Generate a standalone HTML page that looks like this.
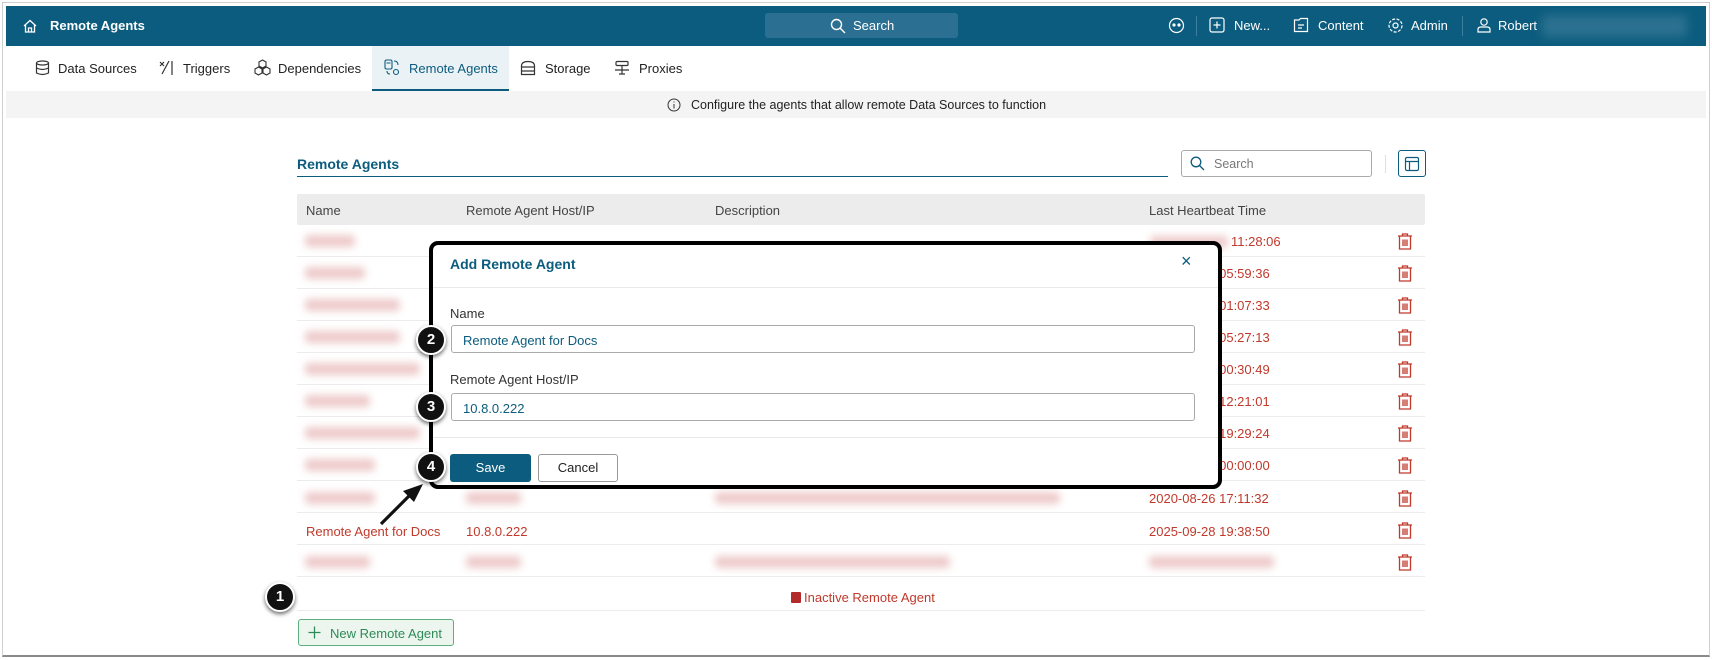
<!DOCTYPE html>
<html><head><meta charset="utf-8"><style>
*{box-sizing:border-box;margin:0;padding:0}
body{width:1712px;height:660px;background:#fff;font-family:"Liberation Sans",sans-serif;position:relative;overflow:hidden;font-size:13px;color:#333}
.abs{position:absolute}
.frame{left:2px;top:2px;width:1708px;height:655px;border:1px solid #cfcfcf;border-bottom:2px solid #8a8a8a}
.nav{left:6px;top:6px;width:1700px;height:40px;background:#0b5c7e;color:#fff}
.nav .t{position:absolute;top:12px;font-size:13px}
.tabs span{position:absolute;top:61px;font-size:13px;color:#222}
.blur{position:absolute;height:12px;background:#d98a8a;filter:blur(4px);opacity:.45;border-radius:4px}
.red{color:#c0392b}
.row{position:absolute;left:297px;width:1128px;height:32px;border-bottom:1px solid #ececec}
.badge{position:absolute;width:30px;height:30px;border-radius:50%;background:#111;border:2px solid #fff;box-shadow:0 2px 4px rgba(0,0,0,.6);color:#fff;font-size:15px;font-weight:bold;text-align:center;line-height:26px}
</style></head><body>
<div class="abs frame"></div>
<div class="abs nav">
 <svg class="abs" style="left:16px;top:12px" width="16" height="16" viewBox="0 0 16 16" fill="none" stroke="#fff" stroke-width="1.3"><path d="M2 8 L8 2.5 L14 8 M3.5 6.8 V14 H12.5 V6.8 M6.5 14 V10 H9.5 V14"/></svg>
 <div class="t" style="left:44px;font-weight:bold">Remote Agents</div>
 <div class="abs" style="left:759px;top:7px;width:193px;height:25px;background:#2b7092;border-radius:3px"></div>
 <svg class="abs" style="left:824px;top:12px" width="16" height="16" viewBox="0 0 16 16" fill="none" stroke="#fff" stroke-width="1.4"><circle cx="6.5" cy="6.5" r="5"/><path d="M10 10 L15 15"/></svg>
 <div class="t" style="left:847px">Search</div>
 <svg class="abs" style="left:1162px;top:11px" width="17" height="17" viewBox="0 0 17 17" fill="none" stroke="#fff" stroke-width="1.2"><circle cx="8.5" cy="8.5" r="7"/><circle cx="6" cy="8" r="1" fill="#fff"/><circle cx="11" cy="8" r="1" fill="#fff"/></svg>
 <div class="abs" style="left:1190px;top:10px;width:1px;height:20px;background:#3d7f9e"></div>
 <svg class="abs" style="left:1203px;top:11px" width="16" height="16" viewBox="0 0 16 16" fill="none" stroke="#fff" stroke-width="1.2"><rect x="1" y="1" width="14" height="14" rx="2"/><path d="M8 4.5 V11.5 M4.5 8 H11.5"/></svg>
 <div class="t" style="left:1228px">New...</div>
 <svg class="abs" style="left:1287px;top:11px" width="16" height="16" viewBox="0 0 16 16" fill="none" stroke="#fff" stroke-width="1.2"><path d="M1.5 3 H6 L7.5 1.5 H14.5 V14.5 H1.5 Z M5 8 H11 M5 11 H9"/></svg>
 <div class="t" style="left:1312px">Content</div>
 <svg class="abs" style="left:1381px;top:11px" width="17" height="17" viewBox="0 0 17 17" fill="none" stroke="#fff" stroke-width="1.2"><circle cx="8.5" cy="8.5" r="2.5"/><circle cx="8.5" cy="8.5" r="6.5" stroke-dasharray="3 1.5"/></svg>
 <div class="t" style="left:1405px">Admin</div>
 <div class="abs" style="left:1456px;top:10px;width:1px;height:20px;background:#3d7f9e"></div>
 <svg class="abs" style="left:1470px;top:11px" width="16" height="16" viewBox="0 0 16 16" fill="none" stroke="#fff" stroke-width="1.2"><circle cx="8" cy="5" r="3.2"/><path d="M2 15 V12.5 Q2 10 5 10 H11 Q14 10 14 12.5 V15 Z"/></svg>
 <div class="t" style="left:1492px">Robert</div>
 <div class="abs" style="left:1536px;top:9px;width:145px;height:22px;background:#3a7a98;filter:blur(5px);opacity:.7"></div>
</div>
<div class="abs" style="left:372px;top:46px;width:137px;height:45px;background:#ebf2f6;border-bottom:2px solid #0b5c7e"></div>
<div class="tabs">
 <svg class="abs" style="left:35px;top:60px" width="15" height="16" viewBox="0 0 15 16" fill="none" stroke="#333" stroke-width="1.2"><ellipse cx="7.5" cy="3" rx="6" ry="2"/><path d="M1.5 3 V13 Q7.5 16 13.5 13 V3 M1.5 8 Q7.5 11 13.5 8"/></svg>
 <span style="left:58px">Data Sources</span>
 <svg class="abs" style="left:159px;top:60px" width="16" height="16" viewBox="0 0 16 16" fill="none" stroke="#333" stroke-width="1.2"><path d="M1 2 L5 6 M1 6 L5 2 M3 14 L10 1 M13 1 V15"/></svg>
 <span style="left:183px">Triggers</span>
 <svg class="abs" style="left:254px;top:59px" width="17" height="17" viewBox="0 0 17 17" fill="none" stroke="#333" stroke-width="1.1"><path d="M8.5 1 L12 3 V7 L8.5 9 L5 7 V3 Z M4.5 8 L8 10 V14 L4.5 16 L1 14 V10 Z M12.5 8 L16 10 V14 L12.5 16 L9 14 V10 Z"/></svg>
 <span style="left:278px">Dependencies</span>
 <svg class="abs" style="left:384px;top:59px" width="17" height="17" viewBox="0 0 17 17" fill="none" stroke="#0b5c7e" stroke-width="1.1"><rect x="1" y="1" width="7" height="9" rx="1.5"/><path d="M2.5 4 H6.5 M10 2 Q14 2 14 6 M3 12 Q3 15 6 15"/><circle cx="12" cy="13" r="2.5"/></svg>
 <span style="left:409px;color:#0b5c7e">Remote Agents</span>
 <svg class="abs" style="left:520px;top:60px" width="16" height="16" viewBox="0 0 16 16" fill="none" stroke="#333" stroke-width="1.2"><path d="M1.5 6 Q1.5 1.5 8 1.5 Q14.5 1.5 14.5 6 V14.5 H1.5 Z M1.5 7 H14.5 M1.5 11 H14.5"/></svg>
 <span style="left:545px">Storage</span>
 <svg class="abs" style="left:614px;top:60px" width="16" height="16" viewBox="0 0 16 16" fill="none" stroke="#333" stroke-width="1.2"><rect x="2" y="1.5" width="12" height="4" rx="1"/><path d="M8 5.5 V14 M1 10 H15 M5 14 H11"/></svg>
 <span style="left:639px">Proxies</span>
</div>
<div class="abs" style="left:6px;top:91px;width:1700px;height:27px;background:#f4f4f4"></div>
<svg class="abs" style="left:667px;top:98px" width="14" height="14" viewBox="0 0 14 14" fill="none" stroke="#333" stroke-width="1"><circle cx="7" cy="7" r="6"/><path d="M7 6 V10.5 M7 3.5 V4.5"/></svg>
<div class="abs" style="left:691px;top:98px;font-size:12.5px;color:#222">Configure the agents that allow remote Data Sources to function</div>

<div class="abs" style="left:297px;top:156px;font-size:14px;font-weight:bold;color:#0b5c7e">Remote Agents</div>
<div class="abs" style="left:297px;top:176px;width:871px;height:1px;background:#0b5c7e"></div>
<div class="abs" style="left:1181px;top:150px;width:191px;height:27px;border:1px solid #aaa;border-radius:3px"></div>
<svg class="abs" style="left:1190px;top:156px" width="15" height="15" viewBox="0 0 15 15" fill="none" stroke="#0b5c7e" stroke-width="1.3"><circle cx="6" cy="6" r="4.8"/><path d="M9.5 9.5 L14 14"/></svg>
<div class="abs" style="left:1214px;top:157px;color:#777;font-size:12.5px">Search</div>
<div class="abs" style="left:1385px;top:155px;width:1px;height:18px;background:#e0e0e0"></div>
<div class="abs" style="left:1398px;top:150px;width:28px;height:27px;border:1px solid #0b5c7e;border-radius:3px"></div>
<svg class="abs" style="left:1404px;top:156px" width="16" height="16" viewBox="0 0 16 16" fill="none" stroke="#0b5c7e" stroke-width="1.2"><rect x="1.5" y="1.5" width="13" height="13" rx="1.5"/><path d="M1.5 5.5 H14.5 M5.5 5.5 V14.5"/></svg>

<div class="abs" style="left:297px;top:194px;width:1128px;height:31px;background:#ececec;border-radius:2px"></div>
<div class="abs" style="left:306px;top:203px;color:#444">Name</div>
<div class="abs" style="left:466px;top:203px;color:#444">Remote Agent Host/IP</div>
<div class="abs" style="left:715px;top:203px;color:#444">Description</div>
<div class="abs" style="left:1149px;top:203px;color:#444">Last Heartbeat Time</div>

<div class="row" style="top:225px"></div><div class="row" style="top:257px"></div><div class="row" style="top:289px"></div><div class="row" style="top:321px"></div><div class="row" style="top:353px"></div><div class="row" style="top:385px"></div><div class="row" style="top:417px"></div><div class="row" style="top:449px"></div><div class="row" style="top:481px"></div><div class="row" style="top:513px"></div><div class="row" style="top:545px"></div><div class="row" style="top:577px;height:34px"></div>

<div class="blur" style="left:305px;top:235px;width:50px"></div>
<div class="blur" style="left:305px;top:267px;width:60px"></div>
<div class="blur" style="left:305px;top:299px;width:95px"></div>
<div class="blur" style="left:305px;top:331px;width:95px"></div>
<div class="blur" style="left:305px;top:363px;width:115px"></div>
<div class="blur" style="left:305px;top:395px;width:65px"></div>
<div class="blur" style="left:305px;top:427px;width:115px"></div>
<div class="blur" style="left:305px;top:459px;width:70px"></div>
<div class="blur" style="left:305px;top:492px;width:70px"></div>
<div class="blur" style="left:466px;top:492px;width:55px"></div>
<div class="blur" style="left:715px;top:492px;width:345px"></div>
<div class="blur" style="left:305px;top:556px;width:65px"></div>
<div class="blur" style="left:466px;top:556px;width:55px"></div>
<div class="blur" style="left:715px;top:556px;width:235px"></div>
<div class="blur" style="left:1149px;top:556px;width:125px"></div>

<div class="blur" style="left:1150px;top:236px;width:78px"></div>
<div class="abs red" style="left:1231px;top:234px">11:28:06</div>
<div class="abs red" style="left:1149px;top:266px">2024-10-01 05:59:36</div>
<div class="abs red" style="left:1149px;top:298px">2024-10-01 01:07:33</div>
<div class="abs red" style="left:1149px;top:330px">2024-10-01 05:27:13</div>
<div class="abs red" style="left:1149px;top:362px">2024-10-01 00:30:49</div>
<div class="abs red" style="left:1149px;top:394px">2024-10-01 12:21:01</div>
<div class="abs red" style="left:1149px;top:426px">2024-10-01 19:29:24</div>
<div class="abs red" style="left:1149px;top:458px">2024-10-01 00:00:00</div>
<div class="abs red" style="left:1149px;top:491px">2020-08-26 17:11:32</div>
<div class="abs red" style="left:306px;top:524px">Remote Agent for Docs</div>
<div class="abs red" style="left:466px;top:524px">10.8.0.222</div>
<div class="abs red" style="left:1149px;top:524px">2025-09-28 19:38:50</div>

<svg class="abs" style="left:0;top:0" width="1712" height="660">
 <defs><g id="tr" fill="none" stroke="#c0392b" stroke-width="1.3"><path d="M1 3 H15 M5.5 3 V1 H10.5 V3 M2.5 3 V16 H13.5 V3 M6 6.5 V13 M8 6.5 V13 M10 6.5 V13"/></g></defs>
 <use href="#tr" x="1397" y="233"/><use href="#tr" x="1397" y="265"/><use href="#tr" x="1397" y="297"/><use href="#tr" x="1397" y="329"/><use href="#tr" x="1397" y="361"/><use href="#tr" x="1397" y="393"/><use href="#tr" x="1397" y="425"/><use href="#tr" x="1397" y="457"/><use href="#tr" x="1397" y="490"/><use href="#tr" x="1397" y="522"/><use href="#tr" x="1397" y="554"/>
</svg>

<div class="abs" style="left:791px;top:592px;width:10px;height:11px;background:#b22a2a;border-radius:1px"></div>
<div class="abs red" style="left:804px;top:590px">Inactive Remote Agent</div>

<div class="abs" style="left:298px;top:619px;width:156px;height:27px;background:#ecf6ef;border:1px solid #5cb07c;border-radius:3px"></div>
<svg class="abs" style="left:308px;top:626px" width="13" height="13" viewBox="0 0 13 13" stroke="#2e8b57" stroke-width="1.3"><path d="M6.5 0.5 V12.5 M0.5 6.5 H12.5"/></svg>
<div class="abs" style="left:330px;top:626px;color:#2e8b57">New Remote Agent</div>

<div class="abs" style="left:429px;top:241px;width:793px;height:248px;border:4px solid #000;border-radius:9px;background:#fff"></div>
<div class="abs" style="left:450px;top:256px;font-size:14px;font-weight:bold;color:#0b5c7e">Add Remote Agent</div>
<div class="abs" style="left:1181px;top:251px;font-size:18px;color:#0b5c7e">×</div>
<div class="abs" style="left:433px;top:287px;width:785px;height:1px;background:#e8e8e8"></div>
<div class="abs" style="left:450px;top:306px;color:#333">Name</div>
<div class="abs" style="left:451px;top:325px;width:744px;height:28px;border:1px solid #aaa;border-radius:3px"></div>
<div class="abs" style="left:463px;top:333px;color:#0b5c7e">Remote Agent for Docs</div>
<div class="abs" style="left:450px;top:372px;color:#333">Remote Agent Host/IP</div>
<div class="abs" style="left:451px;top:393px;width:744px;height:28px;border:1px solid #aaa;border-radius:3px"></div>
<div class="abs" style="left:463px;top:401px;color:#0b5c7e">10.8.0.222</div>
<div class="abs" style="left:433px;top:437px;width:785px;height:1px;background:#e8e8e8"></div>
<div class="abs" style="left:450px;top:454px;width:81px;height:28px;background:#0b5c7e;border-radius:3px;color:#fff;text-align:center;line-height:28px">Save</div>
<div class="abs" style="left:538px;top:454px;width:80px;height:28px;border:1px solid #999;border-radius:3px;color:#222;text-align:center;line-height:26px">Cancel</div>

<svg class="abs" style="left:0;top:0" width="1712" height="660"><path d="M381 524 L411 494" stroke="#111" stroke-width="3.2"/><path d="M423 484 L403 491 L414 502 Z" fill="#111"/></svg>

<div class="badge" style="left:265px;top:582px">1</div>
<div class="badge" style="left:416px;top:325px">2</div>
<div class="badge" style="left:416px;top:392px">3</div>
<div class="badge" style="left:416px;top:452px">4</div>
</body></html>
